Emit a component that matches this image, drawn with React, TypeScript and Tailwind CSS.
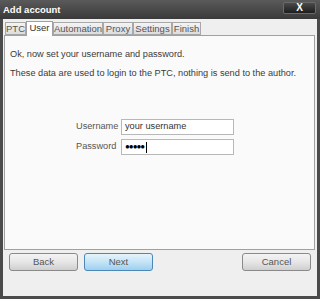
import React from "react";

const tabs = ["PTC", "User", "Automation", "Proxy", "Settings", "Finish"];
const tabW = [21, 27, 50, 30, 39, 29];

export default function App() {
  return (
    <div
      className="w-[320px] h-[299px] bg-[#4b4b4b] flex flex-col overflow-hidden"
      style={{ fontFamily: "'Liberation Sans', Arial, sans-serif" }}
    >
      {/* title bar */}
      <div className="h-[19px] flex items-start bg-gradient-to-b from-[#5a5a5a] to-[#3a3a3a] relative">
        <span className="text-white font-bold text-[9.5px] leading-none ml-[3px] mt-[5px]">
          Add account
        </span>
        <div className="absolute right-[4px] top-[2px] w-[33px] h-[12px] rounded-[2px] bg-gradient-to-b from-[#4a4a4a] to-[#1e1e1e] border border-[#6a6a6a] flex items-center justify-center">
          <span className="text-white font-bold text-[10px] leading-none">X</span>
        </div>
      </div>
      {/* body */}
      <div className="flex-1 mx-[3px] mb-[3px] bg-[#efefef] flex flex-col">
        <div className="flex-1 flex flex-col pt-[1px] px-[1px]">
          <div className="flex items-end h-[15px] pl-[1px] relative z-10">
            {tabs.map((t, i) => {
              const sel = t === "User";
              return (
                <div
                  key={t}
                  style={{ width: tabW[i] }}
                  className={
                    sel
                      ? "h-[15px] bg-white border border-b-0 border-[#a0a0a0] text-[9.5px] text-[#333] flex items-center justify-center leading-none -mb-[1px] pb-[2px]"
                      : "h-[13px] bg-gradient-to-b from-[#f4f4f4] to-[#dcdcdc] border border-[#a8a8a8] text-[9.5px] text-[#555] flex items-center justify-center leading-none"
                  }
                >
                  {t}
                </div>
              );
            })}
          </div>
          <div className="flex-1 bg-[#fafafa] border border-[#a0a0a0] flex flex-col text-[9.2px] text-[#3a3a3a] mr-[1px]">
            <div className="pl-[5px] pt-[9px] leading-[19px]">
              <div>Ok, now set your username and password.</div>
              <div>These data are used to login to the PTC, nothing is send to the author.</div>
            </div>
            <div className="mt-[36px] ml-[71px] flex flex-col gap-[4px]">
              <div className="flex items-center">
                <span className="w-[45px] text-[#555]">Username</span>
                <div className="w-[113px] h-[16px] bg-white border border-[#b8b8b8] flex items-center pl-[3px] text-[#333]">
                  your username
                </div>
              </div>
              <div className="flex items-center">
                <span className="w-[45px] text-[#555]">Password</span>
                <div className="w-[113px] h-[16px] bg-white border border-[#b8b8b8] flex items-center pl-[3px]">
                  <span className="text-[8px] tracking-[-1px] text-black">●●●●●</span>
                  <span className="ml-[2px] w-[1px] h-[11px] bg-black" />
                </div>
              </div>
            </div>
          </div>
        </div>
        <div className="h-[46px] flex items-start pt-[3px] px-[6px] text-[9.5px] text-[#555]">
          <button className="w-[69px] h-[18px] rounded-[3px] border border-[#8a8a8a] bg-gradient-to-b from-[#f4f4f4] via-[#e6e6e6] to-[#cfcfcf] flex items-center justify-center leading-none">
            Back
          </button>
          <button className="ml-[6px] w-[69px] h-[18px] rounded-[3px] border border-[#4b88b8] bg-gradient-to-b from-[#e6f4fc] via-[#c4e4f6] to-[#9ed0ee] flex items-center justify-center leading-none">
            Next
          </button>
          <div className="flex-1" />
          <button className="w-[69px] h-[18px] rounded-[3px] border border-[#8a8a8a] bg-gradient-to-b from-[#f4f4f4] via-[#e6e6e6] to-[#cfcfcf] flex items-center justify-center leading-none">
            Cancel
          </button>
        </div>
      </div>
    </div>
  );
}
